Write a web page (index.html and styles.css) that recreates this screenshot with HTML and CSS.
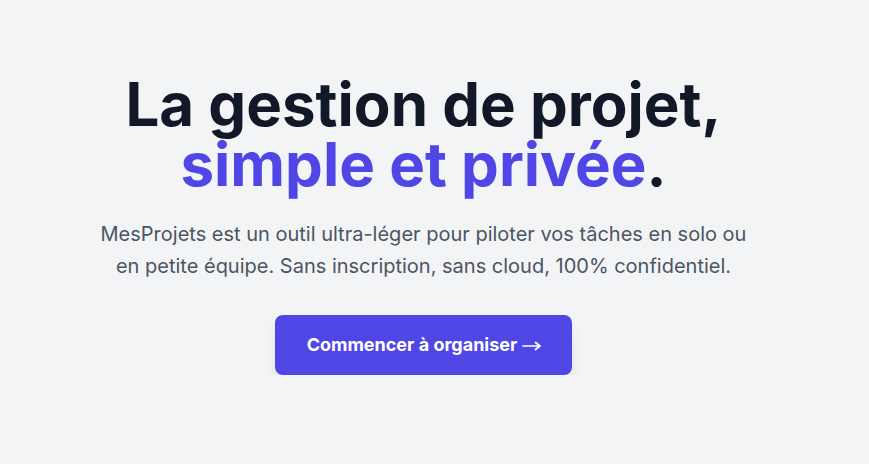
FILE: index.html
```html
<!DOCTYPE html>
<html lang="fr">
<head>
  <meta charset="UTF-8" />
  <meta name="viewport" content="width=device-width, initial-scale=1.0" />
  <title>MesProjets</title>
  <link rel="stylesheet" href="styles.css">
</head>
<body>
  <main class="hero">
    <h1 class="hero-title">
      La gestion de projet,<br>
      <span class="accent">simple et privée</span>.
    </h1>
    <p class="hero-text">
      MesProjets est un outil ultra-léger pour piloter vos tâches en solo ou en petite équipe. Sans inscription, sans cloud, 100% confidentiel.
    </p>
    <button class="cta" onclick="window.location.href='#app'">
      Commencer à organiser
      <svg class="arrow" width="19" height="10" viewBox="0 0 19 10" fill="none" stroke="currentColor" stroke-width="1.7" stroke-linecap="round" stroke-linejoin="round">
        <path d="M1 5h17M13.5 1.5L18 5l-4.5 3.5" />
      </svg>
    </button>
  </main>
</body>
</html>
```

FILE: styles.css
```css
body {
  margin: 0;
  background-color: #f3f4f6;
  font-family: Inter, "Noto Sans", sans-serif;
  color: #111827;
}
.hero {
  display: flex;
  flex-direction: column;
  align-items: center;
  text-align: center;
  padding: 74px 22px 0 0;
}
.hero-title {
  margin: 0 0 24px;
  font-size: 60px;
  line-height: 1;
  font-weight: 700;
  color: #111827;
}
.accent {
  color: #4f46e5;
}
.hero-text {
  margin: 0 0 33px;
  max-width: 672px;
  font-size: 20px;
  line-height: 1.6;
  color: #4b5563;
}
.cta {
  display: flex;
  align-items: center;
  gap: 5px;
  padding: 16px 31px 16px 32px;
  background-color: #4f46e5;
  color: white;
  border: none;
  border-radius: 8px;
  cursor: pointer;
  font-family: inherit;
  font-size: 18px;
  line-height: 28px;
  font-weight: 700;
  box-shadow: 0 10px 15px -3px rgba(0, 0, 0, 0.1), 0 4px 6px -4px rgba(0, 0, 0, 0.1);
}
.arrow {
  margin-top: 2px;
}
```
